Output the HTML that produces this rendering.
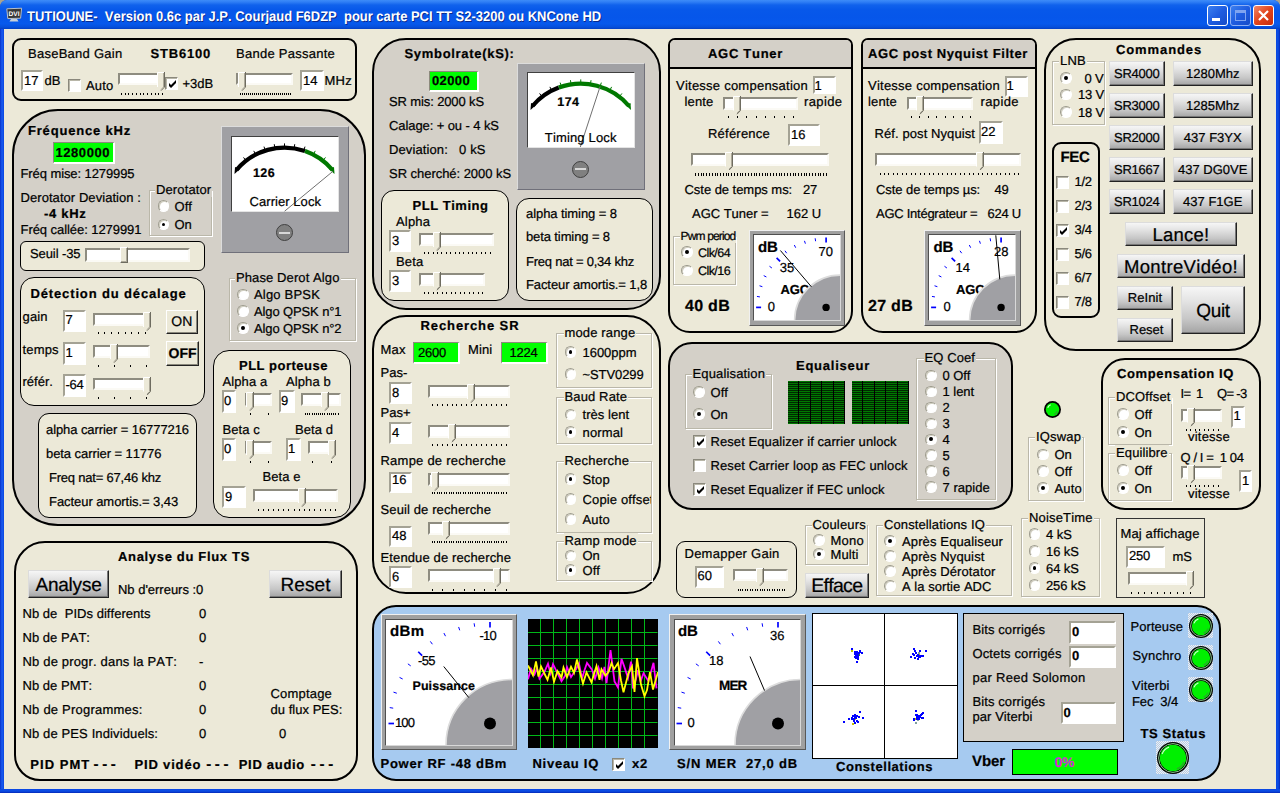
<!DOCTYPE html>
<html lang="fr"><head><meta charset="utf-8"><title>TUTIOUNE</title>
<style>
html,body{margin:0;padding:0;background:#ECE9D8;overflow:hidden}
#w{position:relative;width:1280px;height:793px;overflow:hidden;background:#a8a490;font-family:"Liberation Sans",Arial,sans-serif;font-size:13px;color:#000;font-kerning:none;text-rendering:geometricPrecision}
#w div,#w span,#w svg{position:absolute;box-sizing:border-box}
#w span{white-space:pre;-webkit-text-stroke:0.22px #000}
.tb{background:#fff;border:2px solid;border-color:#a4a294 #fff #fff #a4a294}
.gb{background:#00FF00;border:solid;border-width:1px 2px 2px 1px;border-color:#8c8a7c #fff #fff #8c8a7c}
.tr{background:#fff;border:2px solid;border-color:#8e8c80 #fbfaf5 #fbfaf5 #8e8c80}
.rd{width:11.4px;height:11.4px;border-radius:50%;background:#fff;border:1px solid;border-color:#a09e90 #fff #fff #a09e90;box-shadow:inset 1px 1px 0 #d0cec0}
.rd.on::after{content:"";position:absolute;left:2.9px;top:2.9px;width:3.8px;height:3.8px;border-radius:50%;background:#000}
.ck{width:13px;height:13px;background:#fff;border:1px solid;border-color:#8a887c #fff #fff #8a887c;box-shadow:inset 1px 1px 0 #b8b6a8}
.grp{border:1px solid #bab7a9;box-shadow:1px 1px 0 #fff,inset 1px 1px 0 #fff}
.bt{background:linear-gradient(#f6f6f6 0%,#e4e4e4 30%,#c6c6c6 70%,#a4a4a4 100%);border:1px solid;border-color:#dcdcdc #222 #222 #dcdcdc;box-shadow:inset -1px -1px 0 #777}
.bf{background:#ECE9D8;border:1px solid;border-color:#fff #222 #222 #fff;box-shadow:inset -1px -1px 0 #8a887c}
</style></head>
<body><div id="w">
<div style="left:0px;top:0px;width:1280px;height:793px;background:#0A3FD9;border-radius:7px 7px 0 0"></div>
<div style="left:0px;top:0px;width:1280px;height:29px;background:linear-gradient(#3d8cf8 0,#2f7ef5 2px,#1062ec 5px,#0758ea 10px,#0656ea 60%,#0759ec 82%,#0650dc 93%,#0440c4 100%);border-radius:7px 7px 0 0"></div>
<div style="left:0px;top:29px;width:4px;height:764px;background:linear-gradient(90deg,#0831c9,#1a5cf0 50%,#0a46e0)"></div>
<div style="left:1276px;top:29px;width:4px;height:764px;background:linear-gradient(90deg,#0a46e0,#0c4fe6 50%,#0527b8)"></div>
<div style="left:0px;top:789px;width:1280px;height:4px;background:linear-gradient(#0a46e0,#0c4fe6 50%,#0527b8)"></div>
<div style="left:4px;top:29px;width:1272px;height:760px;background:#ECE9D8"></div>
<svg style="left:6px;top:7px" width="17" height="16" viewBox="0 0 17 16"><path d="M0.8,1.8 L15.6,1.2 L14.6,11.2 L1.8,11.6 Z" fill="#383838" stroke="#b8c0c8" stroke-width="1"/><path d="M5,12 h6 l1.5,2.6 h-9 z" fill="#c8d0d8"/><text x="2.6" y="9.3" font-size="6.6" font-weight="700" fill="#fff" font-family="Liberation Sans,sans-serif" textLength="11" lengthAdjust="spacingAndGlyphs">DVI</text></svg>
<span style="left:26.5px;top:8px;line-height:16px;font-size:14px;font-weight:700;color:#fff;text-shadow:1px 1px 0 #0a2a8c;-webkit-text-stroke:0;transform:scaleX(0.926);transform-origin:0 0;">TUTIOUNE-  Version 0.6c par J.P. Courjaud F6DZP  pour carte PCI TT S2-3200 ou KNCone HD</span>
<div style="left:1207px;top:5px;width:21px;height:21px;border-radius:3px;border:1px solid #fff;background:linear-gradient(135deg,#3c80f0,#1f5ce0 50%,#164cc8)"><div style="left:4px;top:12px;width:8px;height:3px;background:#fff"></div></div>
<div style="left:1230px;top:5px;width:21px;height:21px;border-radius:3px;border:1px solid #8fb0f4;background:linear-gradient(135deg,#3c80f0,#1f5ce0 50%,#164cc8)"><div style="left:4px;top:4px;width:11px;height:11px;border:1px solid #7fa4f0;border-top-width:3px"></div></div>
<div style="left:1253px;top:5px;width:21px;height:21px;border-radius:3px;border:1px solid #fff;background:linear-gradient(135deg,#f08868,#e2441c 50%,#c62c0c)"><svg style="left:3px;top:3px" width="13" height="13" viewBox="0 0 13 13"><path d="M2,2 L11,11 M11,2 L2,11" stroke="#fff" stroke-width="2.2"/></svg></div>
<div style="left:12px;top:38px;width:345px;height:63px;background:#ECE9D8;border:2px solid #000;border-radius:9px"></div>
<span style="left:28px;top:46px;line-height:15px;letter-spacing:0.26px;">BaseBand Gain</span>
<span style="left:150.5px;top:46px;line-height:15px;font-weight:700;letter-spacing:0.8px;">STB6100</span>
<span style="left:236px;top:46px;line-height:15px;letter-spacing:0.26px;">Bande Passante</span>
<div class="tb" style="left:21px;top:70px;width:22px;height:21px"></div>
<span style="left:24px;top:72.7px;line-height:15px;">17</span>
<span style="left:44.5px;top:73px;line-height:15px;">dB</span>
<div class="ck" style="left:68px;top:79px"></div>
<span style="left:86px;top:78px;line-height:15px;letter-spacing:0.17px;">Auto</span>
<div class="tr" style="left:117.5px;top:72.5px;width:46.5px;height:12.5px"></div>
<svg style="left:157px;top:71.5px" width="8" height="19" viewBox="0 0 8 19"><polygon points="0,0 8,0 8,15 4,19 0,15" fill="#ECE9D8"/><path d="M0.5,15 V0.5 H7" stroke="#fff" fill="none"/><path d="M7.5,0 V15 L4,18.7" stroke="#6e6c60" fill="none"/><path d="M6.5,1 V15 L4,17.6" stroke="#ACA899" fill="none"/></svg>
<svg style="left:121px;top:92.5px" width="43" height="2" viewBox="0 0 43 2" shape-rendering="crispEdges"><path d="M0,0v2M4,0v2M7,0v2M11,0v2M15,0v2M19,0v2M22,0v2M26,0v2M30,0v2M34,0v2M37,0v2M41,0v2" stroke="#000" stroke-width="1" transform="translate(0.5,0)"/></svg>
<div class="ck" style="left:164.5px;top:77px"><svg width="13" height="13" viewBox="0 0 13 13" style="left:0;top:0"><path d="M3,5 V8 L5,10 L10,5 V2 L5,7 Z" fill="#000"/></svg></div>
<span style="left:182.5px;top:76px;line-height:15px;letter-spacing:-0.05px;">+3dB</span>
<div class="tr" style="left:236px;top:72.5px;width:56.5px;height:12.5px"></div>
<svg style="left:238px;top:71.5px" width="8" height="19" viewBox="0 0 8 19"><polygon points="0,0 8,0 8,15 4,19 0,15" fill="#ECE9D8"/><path d="M0.5,15 V0.5 H7" stroke="#fff" fill="none"/><path d="M7.5,0 V15 L4,18.7" stroke="#6e6c60" fill="none"/><path d="M6.5,1 V15 L4,17.6" stroke="#ACA899" fill="none"/></svg>
<svg style="left:239px;top:92.5px" width="53" height="2" viewBox="0 0 53 2" shape-rendering="crispEdges"><path d="M1,0v2M3,0v2M5,0v2M7,0v2M9,0v2M11,0v2M13,0v2M15,0v2M17,0v2M19,0v2M21,0v2M23,0v2M25,0v2M27,0v2M29,0v2M31,0v2M33,0v2M35,0v2M37,0v2M39,0v2M41,0v2M43,0v2M45,0v2M47,0v2M49,0v2M51,0v2" stroke="#000" stroke-width="1" transform="translate(0.5,0)"/></svg>
<div class="tb" style="left:300px;top:70px;width:24px;height:21px"></div>
<span style="left:303px;top:72.7px;line-height:15px;">14</span>
<span style="left:324.5px;top:73px;line-height:15px;letter-spacing:0.22px;">MHz</span>
<div style="left:12px;top:109px;width:353.5px;height:417px;background:#D4D0C8;border:2px solid #000;border-radius:46px"></div>
<span style="left:28px;top:123px;line-height:15px;font-weight:700;letter-spacing:0.81px;">Fréquence kHz</span>
<div class="gb" style="left:52.5px;top:142px;width:62.5px;height:22px"></div>
<span style="left:55.5px;top:144.5px;line-height:15px;font-weight:700;letter-spacing:0.56px;">1280000</span>
<span style="left:20.5px;top:166px;line-height:15px;letter-spacing:-0.09px;">Fréq mise: 1279995</span>
<span style="left:20.5px;top:190px;line-height:15px;letter-spacing:0.06px;">Derotator Deviation :</span>
<span style="left:44px;top:205.5px;line-height:15px;font-weight:700;letter-spacing:0.7px;">-4 kHz</span>
<span style="left:20.5px;top:222px;line-height:15px;letter-spacing:-0.06px;">Fréq callée: 1279991</span>
<div class="grp" style="left:149px;top:190px;width:63px;height:46px"></div>
<span style="left:156px;top:182px;line-height:15px;letter-spacing:0.12px;background:#D4D0C8;padding:0 1px;margin-left:-1px;">Derotator</span>
<div class="rd" style="left:157.8px;top:200.3px"></div>
<span style="left:174.5px;top:198.5px;line-height:15px;letter-spacing:0.07px;">Off</span>
<div class="rd on" style="left:157.8px;top:218.8px"></div>
<span style="left:174.5px;top:217px;line-height:15px;">On</span>
<div style="left:221px;top:126px;width:128px;height:127px;background:#A0A0A4;border:1px solid;border-color:#dcdcdc #70707a #70707a #dcdcdc"></div>
<div style="left:231px;top:136px;width:107.5px;height:76px;background:#fff;border:1px solid;border-color:#404040 #e4e4e4 #e4e4e4 #404040"></div>
<svg style="left:231px;top:136px" width="107.5" height="76" viewBox="0 0 107.5 76"><path d="M5.5,34 A62.63,62.63 0 0 1 74,15.05" stroke="#000" stroke-width="4.2" fill="none"/><path d="M74,15.05 A62.63,62.63 0 0 1 101.5,34" stroke="#007800" stroke-width="4.2" fill="none"/><path d="M15.1,24.75 l-2.58,-3.32" stroke="#000" stroke-width="1"/><path d="M24.7,18.61 l-1.93,-3.73" stroke="#000" stroke-width="1"/><path d="M34.3,14.62 l-1.29,-4" stroke="#000" stroke-width="1"/><path d="M43.9,12.34 l-0.64,-4.15" stroke="#000" stroke-width="1"/><path d="M53.5,11.6 l0,-4.2" stroke="#000" stroke-width="1"/><path d="M63.1,12.34 l0.64,-4.15" stroke="#000" stroke-width="1"/><path d="M72.7,14.62 l1.29,-4" stroke="#000" stroke-width="1"/><path d="M82.3,18.61 l1.93,-3.73" stroke="#007800" stroke-width="1"/><path d="M91.9,24.75 l2.58,-3.32" stroke="#007800" stroke-width="1"/><path d="M3.5,38 l0.5,-7 l5,2 z" fill="#000"/><path d="M103.5,38 l-0.5,-7 l-5,2 z" fill="#007800"/><path d="M101.8,35.4 L53.6,75.2" stroke="#707070" stroke-width="1"/></svg>
<span style="left:253px;top:166px;line-height:14px;font-size:12.5px;font-weight:700;letter-spacing:0.38px;">126</span>
<span style="left:249.5px;top:193.5px;line-height:15px;letter-spacing:0.06px;">Carrier Lock</span>
<div style="left:275.5px;top:224px;width:17px;height:17px;border-radius:50%;background:#808080;border:1.5px solid #404040"></div>
<div style="left:278.5px;top:231.5px;width:11px;height:2px;background:#d8d8d8"></div>
<div style="left:20px;top:241px;width:185px;height:30px;background:#ECE9D8;border:1px solid #000;border-radius:6px"></div>
<span style="left:30px;top:246px;line-height:15px;letter-spacing:-0.09px;">Seuil -35</span>
<div class="tr" style="left:84.5px;top:247.5px;width:105px;height:14.5px"></div>
<div style="left:120px;top:247px;width:8px;height:15.5px;background:#ECE9D8;box-sizing:border-box;border:1px solid;border-color:#fff #6e6c60 #6e6c60 #fff;box-shadow:inset -1px -1px 0 #ACA899"></div>
<div style="left:20px;top:277px;width:185px;height:129px;background:#ECE9D8;border:1px solid #000;border-radius:14px"></div>
<span style="left:30.5px;top:285.5px;line-height:15px;font-weight:700;letter-spacing:0.86px;">Détection du décalage</span>
<span style="left:22.5px;top:309px;line-height:15px;letter-spacing:0.17px;">gain</span>
<div class="tb" style="left:62.5px;top:309.5px;width:23px;height:22.5px"></div>
<span style="left:65.5px;top:312.2px;line-height:15px;">7</span>
<div class="tr" style="left:93px;top:312.5px;width:57px;height:13.5px"></div>
<svg style="left:142.5px;top:311.5px" width="8" height="19" viewBox="0 0 8 19"><polygon points="0,0 8,0 8,15 4,19 0,15" fill="#ECE9D8"/><path d="M0.5,15 V0.5 H7" stroke="#fff" fill="none"/><path d="M7.5,0 V15 L4,18.7" stroke="#6e6c60" fill="none"/><path d="M6.5,1 V15 L4,17.6" stroke="#ACA899" fill="none"/></svg>
<svg style="left:97px;top:332px" width="50" height="2" viewBox="0 0 50 2" shape-rendering="crispEdges"><path d="M1,0v2M7,0v2M14,0v2M21,0v2M28,0v2M34,0v2M41,0v2M48,0v2" stroke="#000" stroke-width="1" transform="translate(0.5,0)"/></svg>
<div class="bf" style="left:166px;top:309.5px;width:31.5px;height:24px"></div>
<span style="left:171.25px;top:312.5px;line-height:16px;font-size:14px;">ON</span>
<span style="left:22.5px;top:342px;line-height:15px;letter-spacing:0.18px;">temps</span>
<div class="tb" style="left:62.5px;top:342px;width:23px;height:23px"></div>
<span style="left:65.5px;top:344.7px;line-height:15px;">1</span>
<div class="tr" style="left:93px;top:345px;width:57px;height:13px"></div>
<svg style="left:110px;top:344px" width="8" height="19" viewBox="0 0 8 19"><polygon points="0,0 8,0 8,15 4,19 0,15" fill="#ECE9D8"/><path d="M0.5,15 V0.5 H7" stroke="#fff" fill="none"/><path d="M7.5,0 V15 L4,18.7" stroke="#6e6c60" fill="none"/><path d="M6.5,1 V15 L4,17.6" stroke="#ACA899" fill="none"/></svg>
<svg style="left:97px;top:364.5px" width="51" height="2" viewBox="0 0 51 2" shape-rendering="crispEdges"><path d="M1,0v2M17,0v2M33,0v2M49,0v2" stroke="#000" stroke-width="1" transform="translate(0.5,0)"/></svg>
<div class="bf" style="left:166px;top:341px;width:33px;height:24.5px"></div>
<span style="left:168.5px;top:344.5px;line-height:16px;font-size:14px;font-weight:700;">OFF</span>
<span style="left:22.5px;top:374px;line-height:15px;">référ.</span>
<div class="tb" style="left:62.5px;top:374px;width:23px;height:22.5px"></div>
<span style="left:65.5px;top:376.7px;line-height:15px;letter-spacing:-0.29px;">-64</span>
<div class="tr" style="left:93px;top:377.5px;width:57px;height:12.5px"></div>
<svg style="left:142.5px;top:376.5px" width="8" height="18.5" viewBox="0 0 8 18.5"><polygon points="0,0 8,0 8,14.5 4,18.5 0,14.5" fill="#ECE9D8"/><path d="M0.5,14.5 V0.5 H7" stroke="#fff" fill="none"/><path d="M7.5,0 V14.5 L4,18.2" stroke="#6e6c60" fill="none"/><path d="M6.5,1 V14.5 L4,17.1" stroke="#ACA899" fill="none"/></svg>
<svg style="left:97px;top:396.5px" width="51" height="2" viewBox="0 0 51 2" shape-rendering="crispEdges"><path d="M1,0v2M17,0v2M33,0v2M49,0v2" stroke="#000" stroke-width="1" transform="translate(0.5,0)"/></svg>
<div style="left:38px;top:413px;width:159px;height:105px;background:#ECE9D8;border:1px solid #000;border-radius:11px"></div>
<span style="left:46px;top:422px;line-height:15px;letter-spacing:-0.08px;">alpha carrier = 16777216</span>
<span style="left:46px;top:445.5px;line-height:15px;letter-spacing:-0.07px;">beta carrier = 11776</span>
<span style="left:49px;top:470px;line-height:15px;letter-spacing:-0.21px;">Freq nat= 67,46 khz</span>
<span style="left:49px;top:493.5px;line-height:15px;letter-spacing:-0.06px;">Facteur amortis.= 3,43</span>
<div class="grp" style="left:229px;top:277.5px;width:127px;height:63px"></div>
<span style="left:236px;top:269.5px;line-height:15px;letter-spacing:0.1px;background:#D4D0C8;padding:0 1px;margin-left:-1px;">Phase Derot Algo</span>
<div class="rd" style="left:237.3px;top:288.8px"></div>
<span style="left:254px;top:287px;line-height:15px;letter-spacing:0.19px;">Algo BPSK</span>
<div class="rd" style="left:237.3px;top:305.3px"></div>
<span style="left:254px;top:303.5px;line-height:15px;letter-spacing:-0.12px;">Algo QPSK n°1</span>
<div class="rd on" style="left:237.3px;top:322.3px"></div>
<span style="left:254px;top:320.5px;line-height:15px;letter-spacing:-0.12px;">Algo QPSK n°2</span>
<div style="left:212.5px;top:350px;width:138.5px;height:168px;background:#ECE9D8;border:1px solid #000;border-radius:16px"></div>
<span style="left:239px;top:358px;line-height:15px;font-weight:700;letter-spacing:0.49px;">PLL porteuse</span>
<span style="left:222.5px;top:374px;line-height:15px;letter-spacing:0.1px;">Alpha a</span>
<span style="left:286px;top:374px;line-height:15px;letter-spacing:0.1px;">Alpha b</span>
<div class="tb" style="left:222px;top:390px;width:14px;height:22.5px"></div>
<span style="left:224px;top:392.7px;line-height:15px;">0</span>
<div class="tr" style="left:245px;top:393px;width:27px;height:13px"></div>
<svg style="left:246px;top:392px" width="8" height="19" viewBox="0 0 8 19"><polygon points="0,0 8,0 8,15 4,19 0,15" fill="#ECE9D8"/><path d="M0.5,15 V0.5 H7" stroke="#fff" fill="none"/><path d="M7.5,0 V15 L4,18.7" stroke="#6e6c60" fill="none"/><path d="M6.5,1 V15 L4,17.6" stroke="#ACA899" fill="none"/></svg>
<svg style="left:250px;top:412.5px" width="20" height="2" viewBox="0 0 20 2" shape-rendering="crispEdges"><path d="M0,0v2M18,0v2" stroke="#000" stroke-width="1" transform="translate(0.5,0)"/></svg>
<div class="tb" style="left:279px;top:390px;width:15.5px;height:22.5px"></div>
<span style="left:281px;top:392.7px;line-height:15px;">9</span>
<div class="tr" style="left:301px;top:393px;width:40px;height:13px"></div>
<svg style="left:321px;top:392px" width="8" height="19" viewBox="0 0 8 19"><polygon points="0,0 8,0 8,15 4,19 0,15" fill="#ECE9D8"/><path d="M0.5,15 V0.5 H7" stroke="#fff" fill="none"/><path d="M7.5,0 V15 L4,18.7" stroke="#6e6c60" fill="none"/><path d="M6.5,1 V15 L4,17.6" stroke="#ACA899" fill="none"/></svg>
<svg style="left:305px;top:412.5px" width="35" height="2" viewBox="0 0 35 2" shape-rendering="crispEdges"><path d="M0,0v2M2,0v2M4,0v2M7,0v2M9,0v2M11,0v2M13,0v2M15,0v2M17,0v2M19,0v2M22,0v2M24,0v2M26,0v2M28,0v2M30,0v2M33,0v2" stroke="#000" stroke-width="1" transform="translate(0.5,0)"/></svg>
<span style="left:222.5px;top:422px;line-height:15px;letter-spacing:0.08px;">Beta c</span>
<span style="left:295px;top:422px;line-height:15px;letter-spacing:0.08px;">Beta d</span>
<div class="tb" style="left:222px;top:438px;width:14px;height:22.5px"></div>
<span style="left:224px;top:440.7px;line-height:15px;">0</span>
<div class="tr" style="left:245px;top:441px;width:27px;height:13px"></div>
<svg style="left:246px;top:440px" width="8" height="19" viewBox="0 0 8 19"><polygon points="0,0 8,0 8,15 4,19 0,15" fill="#ECE9D8"/><path d="M0.5,15 V0.5 H7" stroke="#fff" fill="none"/><path d="M7.5,0 V15 L4,18.7" stroke="#6e6c60" fill="none"/><path d="M6.5,1 V15 L4,17.6" stroke="#ACA899" fill="none"/></svg>
<svg style="left:250px;top:460.5px" width="20" height="2" viewBox="0 0 20 2" shape-rendering="crispEdges"><path d="M0,0v2M18,0v2" stroke="#000" stroke-width="1" transform="translate(0.5,0)"/></svg>
<div class="tb" style="left:286px;top:438px;width:15px;height:22.5px"></div>
<span style="left:288px;top:440.7px;line-height:15px;">1</span>
<div class="tr" style="left:308px;top:441px;width:27px;height:13px"></div>
<svg style="left:327.5px;top:440px" width="8" height="19" viewBox="0 0 8 19"><polygon points="0,0 8,0 8,15 4,19 0,15" fill="#ECE9D8"/><path d="M0.5,15 V0.5 H7" stroke="#fff" fill="none"/><path d="M7.5,0 V15 L4,18.7" stroke="#6e6c60" fill="none"/><path d="M6.5,1 V15 L4,17.6" stroke="#ACA899" fill="none"/></svg>
<svg style="left:312px;top:460.5px" width="21" height="2" viewBox="0 0 21 2" shape-rendering="crispEdges"><path d="M0,0v2M19,0v2" stroke="#000" stroke-width="1" transform="translate(0.5,0)"/></svg>
<span style="left:262.5px;top:469px;line-height:15px;letter-spacing:0.08px;">Beta e</span>
<div class="tb" style="left:222px;top:486px;width:23.5px;height:22px"></div>
<span style="left:225px;top:488.7px;line-height:15px;">9</span>
<div class="tr" style="left:253px;top:489px;width:85px;height:13px"></div>
<svg style="left:298px;top:488px" width="8" height="19" viewBox="0 0 8 19"><polygon points="0,0 8,0 8,15 4,19 0,15" fill="#ECE9D8"/><path d="M0.5,15 V0.5 H7" stroke="#fff" fill="none"/><path d="M7.5,0 V15 L4,18.7" stroke="#6e6c60" fill="none"/><path d="M6.5,1 V15 L4,17.6" stroke="#ACA899" fill="none"/></svg>
<svg style="left:257px;top:508.5px" width="80" height="2" viewBox="0 0 80 2" shape-rendering="crispEdges"><path d="M1,0v2M6,0v2M11,0v2M16,0v2M21,0v2M26,0v2M31,0v2M37,0v2M42,0v2M47,0v2M52,0v2M57,0v2M63,0v2M68,0v2M73,0v2M78,0v2" stroke="#000" stroke-width="1" transform="translate(0.5,0)"/></svg>
<div style="left:14px;top:541px;width:344px;height:240px;background:#ECE9D8;border:2px solid #000;border-radius:31px 31px 26px 26px"></div>
<span style="left:118px;top:549px;line-height:15px;font-weight:700;letter-spacing:0.67px;">Analyse du Flux TS</span>
<div class="bt" style="left:28px;top:570px;width:81px;height:27.5px"></div>
<span style="left:35.5px;top:574.5px;line-height:21px;font-size:19px;letter-spacing:-0.23px;">Analyse</span>
<div class="bt" style="left:269px;top:570px;width:73px;height:27.5px"></div>
<span style="left:280.5px;top:574.5px;line-height:21px;font-size:19px;letter-spacing:0.07px;">Reset</span>
<span style="left:118px;top:582px;line-height:15px;letter-spacing:-0.02px;">Nb d'erreurs :0</span>
<span style="left:22.5px;top:605.5px;line-height:15px;letter-spacing:0.04px;">Nb de  PIDs differents</span>
<span style="left:199px;top:605.5px;line-height:15px;">0</span>
<span style="left:22.5px;top:630px;line-height:15px;letter-spacing:0.03px;">Nb de PAT:</span>
<span style="left:199px;top:630px;line-height:15px;">0</span>
<span style="left:22.5px;top:653.5px;line-height:15px;letter-spacing:0.17px;">Nb de progr. dans la PAT:</span>
<span style="left:199px;top:653.5px;line-height:15px;">-</span>
<span style="left:22.5px;top:677.5px;line-height:15px;letter-spacing:0.03px;">Nb de PMT:</span>
<span style="left:199px;top:677.5px;line-height:15px;">0</span>
<span style="left:22.5px;top:702px;line-height:15px;letter-spacing:0.22px;">Nb de Programmes:</span>
<span style="left:199px;top:702px;line-height:15px;">0</span>
<span style="left:22.5px;top:725.5px;line-height:15px;letter-spacing:0.12px;">Nb de PES Individuels:</span>
<span style="left:199px;top:725.5px;line-height:15px;">0</span>
<span style="left:270.5px;top:686px;line-height:15px;letter-spacing:0.19px;">Comptage</span>
<span style="left:270.5px;top:702px;line-height:15px;letter-spacing:0.03px;">du flux PES:</span>
<span style="left:279px;top:725.5px;line-height:15px;">0</span>
<span style="left:30.3px;top:757px;line-height:15px;font-weight:700;letter-spacing:1.04px;">PID PMT</span>
<span style="left:93.5px;top:756px;line-height:17px;font-size:15px;font-weight:700;letter-spacing:3.67px;">---</span>
<span style="left:134.5px;top:757px;line-height:15px;font-weight:700;letter-spacing:0.83px;">PID vidéo</span>
<span style="left:206.2px;top:756px;line-height:17px;font-size:15px;font-weight:700;letter-spacing:3.67px;">---</span>
<span style="left:238.75px;top:757px;line-height:15px;font-weight:700;letter-spacing:0.7px;">PID audio</span>
<span style="left:310.8px;top:756px;line-height:17px;font-size:15px;font-weight:700;letter-spacing:3.67px;">---</span>
<div style="left:372px;top:38px;width:289px;height:272px;background:#D4D0C8;border:2px solid #000;border-radius:34px"></div>
<span style="left:404.5px;top:46px;line-height:15px;font-weight:700;letter-spacing:0.69px;">Symbolrate(kS):</span>
<div class="gb" style="left:429px;top:70.5px;width:50px;height:21px"></div>
<span style="left:432px;top:72.5px;line-height:15px;font-weight:700;letter-spacing:0.37px;">02000</span>
<span style="left:389px;top:93.5px;line-height:15px;letter-spacing:-0.12px;">SR mis: 2000 kS</span>
<span style="left:389px;top:118px;line-height:15px;letter-spacing:-0.09px;">Calage: + ou - 4 kS</span>
<span style="left:389px;top:142px;line-height:15px;letter-spacing:0.11px;">Deviation:   0 kS</span>
<span style="left:389px;top:165.5px;line-height:15px;letter-spacing:-0.04px;">SR cherché: 2000 kS</span>
<div style="left:517px;top:62.5px;width:127.5px;height:127px;background:#A0A0A4;border:1px solid;border-color:#dcdcdc #70707a #70707a #dcdcdc"></div>
<div style="left:527px;top:72px;width:108px;height:76px;background:#fff;border:1px solid;border-color:#404040 #e4e4e4 #e4e4e4 #404040"></div>
<svg style="left:527px;top:72px" width="108" height="76" viewBox="0 0 108 76"><path d="M5.5,34 A63.17,63.17 0 0 1 31.8,15.54" stroke="#000" stroke-width="4.2" fill="none"/><path d="M31.8,15.54 A63.17,63.17 0 0 1 102,34" stroke="#007800" stroke-width="4.2" fill="none"/><path d="M15.15,24.77 l-2.57,-3.32" stroke="#000" stroke-width="1"/><path d="M24.8,18.62 l-1.92,-3.73" stroke="#000" stroke-width="1"/><path d="M34.45,14.62 l-1.28,-4" stroke="#007800" stroke-width="1"/><path d="M44.1,12.34 l-0.64,-4.15" stroke="#007800" stroke-width="1"/><path d="M53.75,11.6 l0,-4.2" stroke="#007800" stroke-width="1"/><path d="M63.4,12.34 l0.64,-4.15" stroke="#007800" stroke-width="1"/><path d="M73.05,14.62 l1.28,-4" stroke="#007800" stroke-width="1"/><path d="M82.7,18.62 l1.92,-3.73" stroke="#007800" stroke-width="1"/><path d="M92.35,24.77 l2.57,-3.32" stroke="#007800" stroke-width="1"/><path d="M3.5,38 l0.5,-7 l5,2 z" fill="#000"/><path d="M104,38 l-0.5,-7 l-5,2 z" fill="#007800"/><path d="M73.1,14.5 L53.3,75" stroke="#707070" stroke-width="1"/></svg>
<span style="left:557.3px;top:94.5px;line-height:14px;font-size:12.5px;font-weight:700;letter-spacing:0.38px;">174</span>
<span style="left:544.8px;top:130px;line-height:15px;letter-spacing:0.16px;">Timing Lock</span>
<div style="left:571.5px;top:160.5px;width:17px;height:17px;border-radius:50%;background:#808080;border:1.5px solid #404040"></div>
<div style="left:574.5px;top:168px;width:11px;height:2px;background:#d8d8d8"></div>
<div style="left:380.5px;top:190px;width:128.5px;height:111px;background:#ECE9D8;border:1px solid #000;border-radius:13px"></div>
<span style="left:412.5px;top:197.5px;line-height:15px;font-weight:700;letter-spacing:0.52px;">PLL Timing</span>
<span style="left:396px;top:213.5px;line-height:15px;letter-spacing:0.18px;">Alpha</span>
<div class="tb" style="left:389px;top:230px;width:22px;height:21.5px"></div>
<span style="left:392px;top:232.7px;line-height:15px;">3</span>
<div class="tr" style="left:419px;top:232.5px;width:75px;height:13.5px"></div>
<svg style="left:432.5px;top:231.5px" width="8" height="19" viewBox="0 0 8 19"><polygon points="0,0 8,0 8,15 4,19 0,15" fill="#ECE9D8"/><path d="M0.5,15 V0.5 H7" stroke="#fff" fill="none"/><path d="M7.5,0 V15 L4,18.7" stroke="#6e6c60" fill="none"/><path d="M6.5,1 V15 L4,17.6" stroke="#ACA899" fill="none"/></svg>
<svg style="left:424px;top:252px" width="68" height="2" viewBox="0 0 68 2" shape-rendering="crispEdges"><path d="M0,0v2M4,0v2M9,0v2M13,0v2M17,0v2M22,0v2M26,0v2M31,0v2M35,0v2M39,0v2M44,0v2M48,0v2M52,0v2M57,0v2M61,0v2M66,0v2" stroke="#000" stroke-width="1" transform="translate(0.5,0)"/></svg>
<span style="left:396px;top:253.5px;line-height:15px;letter-spacing:0.17px;">Beta</span>
<div class="tb" style="left:389px;top:270px;width:22px;height:21.5px"></div>
<span style="left:392px;top:272.7px;line-height:15px;">3</span>
<div class="tr" style="left:419px;top:273px;width:66px;height:13px"></div>
<svg style="left:432.5px;top:272px" width="8" height="18.5" viewBox="0 0 8 18.5"><polygon points="0,0 8,0 8,14.5 4,18.5 0,14.5" fill="#ECE9D8"/><path d="M0.5,14.5 V0.5 H7" stroke="#fff" fill="none"/><path d="M7.5,0 V14.5 L4,18.2" stroke="#6e6c60" fill="none"/><path d="M6.5,1 V14.5 L4,17.1" stroke="#ACA899" fill="none"/></svg>
<svg style="left:424px;top:292px" width="60" height="2" viewBox="0 0 60 2" shape-rendering="crispEdges"><path d="M0,0v2M4,0v2M9,0v2M13,0v2M18,0v2M22,0v2M27,0v2M31,0v2M36,0v2M40,0v2M45,0v2M49,0v2M54,0v2M58,0v2" stroke="#000" stroke-width="1" transform="translate(0.5,0)"/></svg>
<div style="left:516px;top:197.5px;width:137px;height:103.5px;background:#ECE9D8;border:1px solid #000;border-radius:13px"></div>
<span style="left:526px;top:205.5px;line-height:15px;letter-spacing:-0.07px;">alpha timing = 8</span>
<span style="left:526px;top:229px;line-height:15px;letter-spacing:-0.11px;">beta timing = 8</span>
<span style="left:526px;top:253.5px;line-height:15px;letter-spacing:-0.23px;">Freq nat = 0,34 khz</span>
<span style="left:526px;top:277px;line-height:15px;letter-spacing:-0.1px;">Facteur amortis.= 1,8</span>
<div style="left:372px;top:315px;width:289px;height:279px;background:#ECE9D8;border:2px solid #000;border-radius:34px"></div>
<span style="left:420.5px;top:318px;line-height:15px;font-weight:700;letter-spacing:0.9px;">Recherche SR</span>
<span style="left:380.5px;top:342px;line-height:15px;letter-spacing:0.22px;">Max</span>
<div class="gb" style="left:412.5px;top:342px;width:47px;height:21.5px"></div>
<span style="left:418px;top:345px;line-height:15px;letter-spacing:-0.23px;">2600</span>
<span style="left:468px;top:342px;line-height:15px;letter-spacing:0.11px;">Mini</span>
<div class="gb" style="left:500.5px;top:342px;width:47px;height:21.5px"></div>
<span style="left:509.5px;top:345px;line-height:15px;letter-spacing:-0.23px;">1224</span>
<span style="left:380.5px;top:365px;line-height:15px;letter-spacing:0.07px;">Pas-</span>
<div class="tb" style="left:389px;top:382px;width:23px;height:22px"></div>
<span style="left:392px;top:384.7px;line-height:15px;">8</span>
<div class="tr" style="left:427.5px;top:384.5px;width:82px;height:13px"></div>
<svg style="left:467px;top:383.5px" width="8" height="19" viewBox="0 0 8 19"><polygon points="0,0 8,0 8,15 4,19 0,15" fill="#ECE9D8"/><path d="M0.5,15 V0.5 H7" stroke="#fff" fill="none"/><path d="M7.5,0 V15 L4,18.7" stroke="#6e6c60" fill="none"/><path d="M6.5,1 V15 L4,17.6" stroke="#ACA899" fill="none"/></svg>
<svg style="left:432px;top:404px" width="76" height="2" viewBox="0 0 76 2" shape-rendering="crispEdges"><path d="M0,0v2M5,0v2M10,0v2M15,0v2M20,0v2M24,0v2M29,0v2M34,0v2M39,0v2M44,0v2M49,0v2M54,0v2M59,0v2M64,0v2M69,0v2M74,0v2" stroke="#000" stroke-width="1" transform="translate(0.5,0)"/></svg>
<span style="left:380.5px;top:405px;line-height:15px;letter-spacing:0.07px;">Pas+</span>
<div class="tb" style="left:389px;top:422px;width:23px;height:22px"></div>
<span style="left:392px;top:424.7px;line-height:15px;">4</span>
<div class="tr" style="left:427.5px;top:425px;width:82px;height:12.5px"></div>
<svg style="left:448px;top:424px" width="8" height="18.5" viewBox="0 0 8 18.5"><polygon points="0,0 8,0 8,14.5 4,18.5 0,14.5" fill="#ECE9D8"/><path d="M0.5,14.5 V0.5 H7" stroke="#fff" fill="none"/><path d="M7.5,0 V14.5 L4,18.2" stroke="#6e6c60" fill="none"/><path d="M6.5,1 V14.5 L4,17.1" stroke="#ACA899" fill="none"/></svg>
<svg style="left:432px;top:444px" width="76" height="2" viewBox="0 0 76 2" shape-rendering="crispEdges"><path d="M0,0v2M5,0v2M10,0v2M15,0v2M20,0v2M24,0v2M29,0v2M34,0v2M39,0v2M44,0v2M49,0v2M54,0v2M59,0v2M64,0v2M69,0v2M74,0v2" stroke="#000" stroke-width="1" transform="translate(0.5,0)"/></svg>
<span style="left:380.5px;top:453px;line-height:15px;letter-spacing:0.23px;">Rampe de recherche</span>
<div class="tb" style="left:389px;top:472px;width:23px;height:21px"></div>
<span style="left:392px;top:472px;line-height:15px;">16</span>
<div class="tr" style="left:427.5px;top:473px;width:82px;height:13px"></div>
<svg style="left:431px;top:472px" width="8" height="19" viewBox="0 0 8 19"><polygon points="0,0 8,0 8,15 4,19 0,15" fill="#ECE9D8"/><path d="M0.5,15 V0.5 H7" stroke="#fff" fill="none"/><path d="M7.5,0 V15 L4,18.7" stroke="#6e6c60" fill="none"/><path d="M6.5,1 V15 L4,17.6" stroke="#ACA899" fill="none"/></svg>
<svg style="left:432px;top:492px" width="76" height="2" viewBox="0 0 76 2" shape-rendering="crispEdges"><path d="M0,0v2M2,0v2M5,0v2M7,0v2M9,0v2M12,0v2M14,0v2M17,0v2M19,0v2M21,0v2M24,0v2M26,0v2M28,0v2M31,0v2M33,0v2M36,0v2M38,0v2M40,0v2M43,0v2M45,0v2M47,0v2M50,0v2M52,0v2M55,0v2M57,0v2M59,0v2M62,0v2M64,0v2M66,0v2M69,0v2M71,0v2M74,0v2" stroke="#000" stroke-width="1" transform="translate(0.5,0)"/></svg>
<span style="left:380.5px;top:501.5px;line-height:15px;letter-spacing:0.12px;">Seuil de recherche</span>
<div class="tb" style="left:389px;top:525.5px;width:23px;height:21.5px"></div>
<span style="left:392px;top:528.2px;line-height:15px;">48</span>
<div class="tr" style="left:427.5px;top:522px;width:82px;height:12.5px"></div>
<svg style="left:442px;top:521px" width="8" height="18.5" viewBox="0 0 8 18.5"><polygon points="0,0 8,0 8,14.5 4,18.5 0,14.5" fill="#ECE9D8"/><path d="M0.5,14.5 V0.5 H7" stroke="#fff" fill="none"/><path d="M7.5,0 V14.5 L4,18.2" stroke="#6e6c60" fill="none"/><path d="M6.5,1 V14.5 L4,17.1" stroke="#ACA899" fill="none"/></svg>
<svg style="left:432px;top:540.5px" width="76" height="2" viewBox="0 0 76 2" shape-rendering="crispEdges"><path d="M0,0v2M2,0v2M5,0v2M7,0v2M9,0v2M12,0v2M14,0v2M17,0v2M19,0v2M21,0v2M24,0v2M26,0v2M28,0v2M31,0v2M33,0v2M36,0v2M38,0v2M40,0v2M43,0v2M45,0v2M47,0v2M50,0v2M52,0v2M55,0v2M57,0v2M59,0v2M62,0v2M64,0v2M66,0v2M69,0v2M71,0v2M74,0v2" stroke="#000" stroke-width="1" transform="translate(0.5,0)"/></svg>
<span style="left:380.5px;top:549.5px;line-height:15px;letter-spacing:0.13px;">Etendue de recherche</span>
<div class="tb" style="left:389px;top:566px;width:23px;height:21.5px"></div>
<span style="left:392px;top:568.7px;line-height:15px;">6</span>
<div class="tr" style="left:427.5px;top:569px;width:82px;height:13px"></div>
<svg style="left:492.5px;top:568px" width="8" height="19" viewBox="0 0 8 19"><polygon points="0,0 8,0 8,15 4,19 0,15" fill="#ECE9D8"/><path d="M0.5,15 V0.5 H7" stroke="#fff" fill="none"/><path d="M7.5,0 V15 L4,18.7" stroke="#6e6c60" fill="none"/><path d="M6.5,1 V15 L4,17.6" stroke="#ACA899" fill="none"/></svg>
<svg style="left:432px;top:589px" width="76" height="2" viewBox="0 0 76 2" shape-rendering="crispEdges"><path d="M0,0v2M10,0v2M21,0v2M32,0v2M42,0v2M52,0v2M63,0v2M74,0v2" stroke="#000" stroke-width="1" transform="translate(0.5,0)"/></svg>
<div class="grp" style="left:556px;top:332.5px;width:96px;height:55.5px"></div>
<span style="left:564.5px;top:324.5px;line-height:15px;letter-spacing:0.14px;background:#ECE9D8;padding:0 1px;margin-left:-1px;">mode range</span>
<div class="rd on" style="left:564.8px;top:346.3px"></div>
<span style="left:582.5px;top:344.5px;line-height:15px;letter-spacing:-0.04px;">1600ppm</span>
<div class="rd" style="left:564.8px;top:368.3px"></div>
<span style="left:582.5px;top:366.5px;line-height:15px;letter-spacing:-0.08px;">~STV0299</span>
<div class="grp" style="left:556px;top:397px;width:96px;height:47px"></div>
<span style="left:564.5px;top:389px;line-height:15px;letter-spacing:0.13px;background:#ECE9D8;padding:0 1px;margin-left:-1px;">Baud Rate</span>
<div class="rd" style="left:564.8px;top:408.8px"></div>
<span style="left:582.5px;top:407px;line-height:15px;letter-spacing:0.05px;">très lent</span>
<div class="rd on" style="left:564.8px;top:426.3px"></div>
<span style="left:582.5px;top:424.5px;line-height:15px;letter-spacing:0.15px;">normal</span>
<div class="grp" style="left:556px;top:460.5px;width:96px;height:72px"></div>
<span style="left:564.5px;top:452.5px;line-height:15px;letter-spacing:0.2px;background:#ECE9D8;padding:0 1px;margin-left:-1px;">Recherche</span>
<div class="rd on" style="left:564.8px;top:473.3px"></div>
<span style="left:582.5px;top:471.5px;line-height:15px;letter-spacing:0.17px;">Stop</span>
<div class="rd" style="left:564.8px;top:493.3px"></div>
<span style="left:582.5px;top:491.5px;line-height:15px;letter-spacing:0.14px;width:68px;overflow:hidden;">Copie offset</span>
<div class="rd" style="left:564.8px;top:513.3px"></div>
<span style="left:582.5px;top:511.5px;line-height:15px;letter-spacing:0.17px;">Auto</span>
<div class="grp" style="left:556px;top:541px;width:96px;height:39.5px"></div>
<span style="left:564.5px;top:533px;line-height:15px;letter-spacing:0.15px;background:#ECE9D8;padding:0 1px;margin-left:-1px;">Ramp mode</span>
<div class="rd" style="left:564.8px;top:549.8px"></div>
<span style="left:582.5px;top:548px;line-height:15px;">On</span>
<div class="rd on" style="left:564.8px;top:564.3px"></div>
<span style="left:582.5px;top:562.5px;line-height:15px;letter-spacing:0.07px;">Off</span>
<div style="left:668px;top:38px;width:185px;height:295px;background:#ECE9D8;border:2px solid #000;border-radius:7px 7px 22px 22px"></div>
<div style="left:670px;top:40px;width:181px;height:27px;background:#D4D0C8;border-radius:5px 5px 0 0"></div>
<div style="left:668px;top:66.5px;width:185px;height:2px;background:#000"></div>
<span style="left:708px;top:45.5px;line-height:15px;font-weight:700;letter-spacing:0.71px;">AGC Tuner</span>
<span style="left:676px;top:77.5px;line-height:15px;letter-spacing:0.24px;">Vitesse compensation</span>
<div class="tb" style="left:812.5px;top:75.5px;width:23.5px;height:18px"></div>
<span style="left:814.5px;top:78.2px;line-height:15px;">1</span>
<span style="left:684.5px;top:94px;line-height:15px;letter-spacing:0.13px;">lente</span>
<span style="left:804px;top:94px;line-height:15px;letter-spacing:0.39px;">rapide</span>
<div class="tr" style="left:723px;top:97px;width:74.5px;height:12.5px"></div>
<svg style="left:732.5px;top:96px" width="8" height="18.5" viewBox="0 0 8 18.5"><polygon points="0,0 8,0 8,14.5 4,18.5 0,14.5" fill="#ECE9D8"/><path d="M0.5,14.5 V0.5 H7" stroke="#fff" fill="none"/><path d="M7.5,0 V14.5 L4,18.2" stroke="#6e6c60" fill="none"/><path d="M6.5,1 V14.5 L4,17.1" stroke="#ACA899" fill="none"/></svg>
<svg style="left:727px;top:115.5px" width="68" height="2" viewBox="0 0 68 2" shape-rendering="crispEdges"><path d="M1,0v2M10,0v2M19,0v2M29,0v2M38,0v2M47,0v2M57,0v2M66,0v2" stroke="#000" stroke-width="1" transform="translate(0.5,0)"/></svg>
<span style="left:708px;top:125.5px;line-height:15px;letter-spacing:0.22px;">Référence</span>
<div class="tb" style="left:788px;top:124px;width:32px;height:22px"></div>
<span style="left:791px;top:126.7px;line-height:15px;">16</span>
<div class="tr" style="left:691px;top:152.5px;width:138px;height:13px"></div>
<svg style="left:725px;top:151.5px" width="8" height="18.5" viewBox="0 0 8 18.5"><polygon points="0,0 8,0 8,14.5 4,18.5 0,14.5" fill="#ECE9D8"/><path d="M0.5,14.5 V0.5 H7" stroke="#fff" fill="none"/><path d="M7.5,0 V14.5 L4,18.2" stroke="#6e6c60" fill="none"/><path d="M6.5,1 V14.5 L4,17.1" stroke="#ACA899" fill="none"/></svg>
<svg style="left:695px;top:172.5px" width="133" height="3" viewBox="0 0 133 3" shape-rendering="crispEdges"><path d="M0,0v3M3,0v3M6,0v3M8,0v3M11,0v3M14,0v3M17,0v3M20,0v3M22,0v3M25,0v3M28,0v3M31,0v3M33,0v3M36,0v3M39,0v3M42,0v3M45,0v3M47,0v3M50,0v3M53,0v3M56,0v3M59,0v3M61,0v3M64,0v3M67,0v3M70,0v3M72,0v3M75,0v3M78,0v3M81,0v3M84,0v3M86,0v3M89,0v3M92,0v3M95,0v3M98,0v3M100,0v3M103,0v3M106,0v3M109,0v3M111,0v3M114,0v3M117,0v3M120,0v3M123,0v3M125,0v3M128,0v3M131,0v3" stroke="#000" stroke-width="1" transform="translate(0.5,0)"/></svg>
<span style="left:684.5px;top:182px;line-height:15px;letter-spacing:-0.04px;">Cste de temps ms:   27</span>
<span style="left:692px;top:205.5px;line-height:15px;letter-spacing:-0.03px;">AGC Tuner =     162 U</span>
<div class="grp" style="left:672.5px;top:235.5px;width:63.5px;height:49.5px"></div>
<span style="left:680.5px;top:228.5px;line-height:14px;font-size:12px;letter-spacing:-0.84px;background:#ECE9D8;padding:0 1px;margin-left:-1px;">Pwm period</span>
<div class="rd on" style="left:681.3px;top:246.3px"></div>
<span style="left:698px;top:245.5px;line-height:14px;font-size:12.5px;letter-spacing:-0.57px;">Clk/64</span>
<div class="rd" style="left:681.3px;top:264.8px"></div>
<span style="left:698px;top:264px;line-height:14px;font-size:12.5px;letter-spacing:-0.57px;">Clk/16</span>
<span style="left:685px;top:298px;line-height:17px;font-size:16px;font-weight:700;letter-spacing:0.29px;">40 dB</span>
<div style="left:748.5px;top:229.5px;width:96.5px;height:96px;background:#A0A0A0;border:1px solid;border-color:#f0f0f0 #585858 #585858 #f0f0f0"></div>
<div style="left:752.7px;top:233.7px;width:88.1px;height:87.6px;background:#fff;border:1px solid;border-color:#505050 #d8d8d8 #d8d8d8 #505050"></div>
<span style="left:758px;top:239.3px;line-height:17px;font-size:15px;font-weight:700;letter-spacing:-0.25px;">dB</span>
<span style="left:818.5px;top:243.7px;line-height:15px;">70</span>
<span style="left:779.7px;top:259.5px;line-height:15px;">35</span>
<span style="left:767.8px;top:298.5px;line-height:15px;">0</span>
<span style="left:780.5px;top:282px;line-height:15px;font-weight:700;letter-spacing:-0.15px;">AGC1</span>
<svg style="left:753.7px;top:234.7px" width="86.1" height="85.6" viewBox="0 0 86.1 85.6"><circle cx="86.1" cy="85.6" r="45.5" fill="#A0A0A4" stroke="#dcdcdc" stroke-width="1.6"/><circle cx="72.1" cy="72.4" r="3.7" fill="#000"/><path d="M7.1,72.4 L2.1,72.4" stroke="#0000ff" stroke-width="1.7"/><path d="M5.92,61.92 L2.96,61.45" stroke="#0000ff" stroke-width="1"/><path d="M8.38,51.7 L5.53,50.77" stroke="#0000ff" stroke-width="1"/><path d="M12.4,41.98 L9.73,40.62" stroke="#0000ff" stroke-width="1"/><path d="M17.9,33.02 L15.47,31.26" stroke="#0000ff" stroke-width="1"/><path d="M26.14,26.44 L22.6,22.9" stroke="#0000ff" stroke-width="1.7"/><path d="M32.72,18.2 L30.96,15.77" stroke="#0000ff" stroke-width="1"/><path d="M41.68,12.7 L40.32,10.03" stroke="#0000ff" stroke-width="1"/><path d="M51.4,8.68 L50.47,5.83" stroke="#0000ff" stroke-width="1"/><path d="M61.62,6.22 L61.15,3.26" stroke="#0000ff" stroke-width="1"/><path d="M72.1,7.4 L72.1,2.4" stroke="#0000ff" stroke-width="1.7"/><path d="M26.4,15.5 L57.5,51.9" stroke="#000" stroke-width="1"/></svg>
<div style="left:860.5px;top:38px;width:176px;height:295px;background:#ECE9D8;border:2px solid #000;border-radius:7px 7px 22px 22px"></div>
<div style="left:862.5px;top:40px;width:172px;height:27px;background:#D4D0C8;border-radius:5px 5px 0 0"></div>
<div style="left:860.5px;top:66.5px;width:176px;height:2px;background:#000"></div>
<span style="left:868px;top:45.5px;line-height:15px;font-weight:700;letter-spacing:0.58px;">AGC post Nyquist Filter</span>
<span style="left:868px;top:77.5px;line-height:15px;letter-spacing:0.24px;">Vitesse compensation</span>
<div class="tb" style="left:1004.5px;top:75.5px;width:23.5px;height:21.5px"></div>
<span style="left:1006.5px;top:78.2px;line-height:15px;">1</span>
<span style="left:868px;top:94px;line-height:15px;letter-spacing:0.13px;">lente</span>
<span style="left:980.5px;top:94px;line-height:15px;letter-spacing:0.39px;">rapide</span>
<div class="tr" style="left:907px;top:97px;width:66px;height:12.5px"></div>
<svg style="left:915.5px;top:96px" width="8" height="18.5" viewBox="0 0 8 18.5"><polygon points="0,0 8,0 8,14.5 4,18.5 0,14.5" fill="#ECE9D8"/><path d="M0.5,14.5 V0.5 H7" stroke="#fff" fill="none"/><path d="M7.5,0 V14.5 L4,18.2" stroke="#6e6c60" fill="none"/><path d="M6.5,1 V14.5 L4,17.1" stroke="#ACA899" fill="none"/></svg>
<svg style="left:911px;top:115.5px" width="61" height="2" viewBox="0 0 61 2" shape-rendering="crispEdges"><path d="M0,0v2M8,0v2M17,0v2M25,0v2M34,0v2M42,0v2M51,0v2M59,0v2" stroke="#000" stroke-width="1" transform="translate(0.5,0)"/></svg>
<span style="left:874.5px;top:125.5px;line-height:15px;letter-spacing:0.09px;">Réf. post Nyquist</span>
<div class="tb" style="left:979px;top:121px;width:24px;height:23px"></div>
<span style="left:981px;top:123.7px;line-height:15px;">22</span>
<div class="tr" style="left:875px;top:152.5px;width:146px;height:13px"></div>
<svg style="left:976px;top:151.5px" width="8" height="18.5" viewBox="0 0 8 18.5"><polygon points="0,0 8,0 8,14.5 4,18.5 0,14.5" fill="#ECE9D8"/><path d="M0.5,14.5 V0.5 H7" stroke="#fff" fill="none"/><path d="M7.5,0 V14.5 L4,18.2" stroke="#6e6c60" fill="none"/><path d="M6.5,1 V14.5 L4,17.1" stroke="#ACA899" fill="none"/></svg>
<svg style="left:879px;top:172.5px" width="141" height="2" viewBox="0 0 141 2" shape-rendering="crispEdges"><path d="M1,0v2M5,0v2M9,0v2M14,0v2M18,0v2M23,0v2M27,0v2M32,0v2M36,0v2M41,0v2M45,0v2M50,0v2M54,0v2M59,0v2M63,0v2M68,0v2M72,0v2M76,0v2M81,0v2M85,0v2M90,0v2M94,0v2M99,0v2M103,0v2M108,0v2M112,0v2M117,0v2M121,0v2M126,0v2M130,0v2M135,0v2M139,0v2" stroke="#000" stroke-width="1" transform="translate(0.5,0)"/></svg>
<span style="left:876px;top:182px;line-height:15px;letter-spacing:-0.05px;">Cste de temps µs:    49</span>
<span style="left:876px;top:205.5px;line-height:15px;letter-spacing:-0.26px;">AGC Intégrateur =   624 U</span>
<span style="left:868px;top:298px;line-height:17px;font-size:16px;font-weight:700;letter-spacing:0.29px;">27 dB</span>
<div style="left:924px;top:229.5px;width:96.5px;height:96px;background:#A0A0A0;border:1px solid;border-color:#f0f0f0 #585858 #585858 #f0f0f0"></div>
<div style="left:928.2px;top:233.7px;width:88.1px;height:87.6px;background:#fff;border:1px solid;border-color:#505050 #d8d8d8 #d8d8d8 #505050"></div>
<span style="left:933.5px;top:239.3px;line-height:17px;font-size:15px;font-weight:700;letter-spacing:-0.25px;">dB</span>
<span style="left:994px;top:243.7px;line-height:15px;">28</span>
<span style="left:955.5px;top:259.5px;line-height:15px;">14</span>
<span style="left:943.5px;top:298.5px;line-height:15px;">0</span>
<span style="left:956px;top:282px;line-height:15px;font-weight:700;letter-spacing:-0.15px;">AGC2</span>
<svg style="left:929.2px;top:234.7px" width="86.1" height="85.6" viewBox="0 0 86.1 85.6"><circle cx="86.1" cy="85.6" r="45.5" fill="#A0A0A4" stroke="#dcdcdc" stroke-width="1.6"/><circle cx="72.1" cy="72.4" r="3.7" fill="#000"/><path d="M7.1,72.4 L2.1,72.4" stroke="#0000ff" stroke-width="1.7"/><path d="M5.92,61.92 L2.96,61.45" stroke="#0000ff" stroke-width="1"/><path d="M8.38,51.7 L5.53,50.77" stroke="#0000ff" stroke-width="1"/><path d="M12.4,41.98 L9.73,40.62" stroke="#0000ff" stroke-width="1"/><path d="M17.9,33.02 L15.47,31.26" stroke="#0000ff" stroke-width="1"/><path d="M26.14,26.44 L22.6,22.9" stroke="#0000ff" stroke-width="1.7"/><path d="M32.72,18.2 L30.96,15.77" stroke="#0000ff" stroke-width="1"/><path d="M41.68,12.7 L40.32,10.03" stroke="#0000ff" stroke-width="1"/><path d="M51.4,8.68 L50.47,5.83" stroke="#0000ff" stroke-width="1"/><path d="M61.62,6.22 L61.15,3.26" stroke="#0000ff" stroke-width="1"/><path d="M72.1,7.4 L72.1,2.4" stroke="#0000ff" stroke-width="1.7"/><path d="M66.8,0.3 L70.8,44.3" stroke="#000" stroke-width="1"/></svg>
<div style="left:1044px;top:38px;width:217px;height:312.5px;background:#ECE9D8;border:2px solid #000;border-radius:32px"></div>
<span style="left:1116px;top:42px;line-height:15px;font-weight:700;letter-spacing:0.89px;">Commandes</span>
<div class="grp" style="left:1052px;top:60.5px;width:53px;height:64px"></div>
<span style="left:1060px;top:52.5px;line-height:15px;letter-spacing:0.22px;background:#ECE9D8;padding:0 1px;margin-left:-1px;">LNB</span>
<div class="rd on" style="left:1060.3px;top:72.3px"></div>
<span style="left:1084.5px;top:70.5px;line-height:15px;letter-spacing:-0.14px;">0 V</span>
<div class="rd" style="left:1060.3px;top:88.8px"></div>
<span style="left:1078px;top:87px;line-height:15px;letter-spacing:-0.16px;">13 V</span>
<div class="rd" style="left:1060.3px;top:106.3px"></div>
<span style="left:1078px;top:104.5px;line-height:15px;letter-spacing:-0.16px;">18 V</span>
<div style="left:1052px;top:141.5px;width:48px;height:176px;background:#ECE9D8;border:2px solid #000;border-radius:9px"></div>
<span style="left:1060.5px;top:148.5px;line-height:17px;font-size:15px;font-weight:700;letter-spacing:-0.33px;">FEC</span>
<div class="ck" style="left:1056px;top:175.5px"></div>
<span style="left:1074.5px;top:173.5px;line-height:15px;letter-spacing:-0.29px;">1/2</span>
<div class="ck" style="left:1056px;top:199.5px"></div>
<span style="left:1074.5px;top:197.5px;line-height:15px;letter-spacing:-0.29px;">2/3</span>
<div class="ck" style="left:1056px;top:223.5px"><svg width="13" height="13" viewBox="0 0 13 13" style="left:0;top:0"><path d="M3,5 V8 L5,10 L10,5 V2 L5,7 Z" fill="#000"/></svg></div>
<span style="left:1074.5px;top:221.5px;line-height:15px;letter-spacing:-0.29px;">3/4</span>
<div class="ck" style="left:1056px;top:247.5px"></div>
<span style="left:1074.5px;top:245.5px;line-height:15px;letter-spacing:-0.29px;">5/6</span>
<div class="ck" style="left:1056px;top:271.5px"></div>
<span style="left:1074.5px;top:269.5px;line-height:15px;letter-spacing:-0.29px;">6/7</span>
<div class="ck" style="left:1056px;top:295.5px"></div>
<span style="left:1074.5px;top:293.5px;line-height:15px;letter-spacing:-0.29px;">7/8</span>
<div class="bt" style="left:1108.5px;top:61px;width:56.5px;height:24.5px"></div>
<span style="left:1114px;top:66px;line-height:15px;letter-spacing:-0.25px;">SR4000</span>
<div class="bt" style="left:1172.5px;top:61px;width:80.5px;height:24.5px"></div>
<span style="left:1186.01px;top:66px;line-height:15px;">1280Mhz</span>
<div class="bt" style="left:1108.5px;top:93px;width:56.5px;height:24.5px"></div>
<span style="left:1114px;top:98px;line-height:15px;letter-spacing:-0.25px;">SR3000</span>
<div class="bt" style="left:1172.5px;top:93px;width:80.5px;height:24.5px"></div>
<span style="left:1186.01px;top:98px;line-height:15px;">1285Mhz</span>
<div class="bt" style="left:1108.5px;top:125px;width:56.5px;height:24.5px"></div>
<span style="left:1114px;top:130px;line-height:15px;letter-spacing:-0.25px;">SR2000</span>
<div class="bt" style="left:1172.5px;top:125px;width:80.5px;height:24.5px"></div>
<span style="left:1183.84px;top:130px;line-height:15px;">437 F3YX</span>
<div class="bt" style="left:1108.5px;top:157px;width:56.5px;height:24.5px"></div>
<span style="left:1114px;top:162px;line-height:15px;letter-spacing:-0.25px;">SR1667</span>
<div class="bt" style="left:1172.5px;top:157px;width:80.5px;height:24.5px"></div>
<span style="left:1178.06px;top:162px;line-height:15px;">437 DG0VE</span>
<div class="bt" style="left:1108.5px;top:189px;width:56.5px;height:24.5px"></div>
<span style="left:1114px;top:194px;line-height:15px;letter-spacing:-0.25px;">SR1024</span>
<div class="bt" style="left:1172.5px;top:189px;width:80.5px;height:24.5px"></div>
<span style="left:1183.12px;top:194px;line-height:15px;">437 F1GE</span>
<div class="bt" style="left:1125px;top:222px;width:112px;height:23.5px"></div>
<span style="left:1152.5px;top:223.5px;line-height:21px;font-size:18.5px;letter-spacing:0.24px;">Lance!</span>
<div class="bt" style="left:1117px;top:254px;width:128px;height:23.5px"></div>
<span style="left:1124px;top:255.5px;line-height:21px;font-size:18.5px;letter-spacing:0.33px;">MontreVidéo!</span>
<div class="bt" style="left:1117px;top:285.5px;width:56px;height:24px"></div>
<span style="left:1127.75px;top:290px;line-height:15px;letter-spacing:0.09px;">ReInit</span>
<div class="bt" style="left:1117px;top:317.5px;width:56px;height:24px"></div>
<span style="left:1129.5px;top:322px;line-height:15px;">Reset</span>
<div class="bt" style="left:1181px;top:285.5px;width:64px;height:48.5px"></div>
<span style="left:1196.25px;top:300.5px;line-height:21px;font-size:19px;letter-spacing:-0.34px;">Quit</span>
<div style="left:668px;top:342px;width:345px;height:168px;background:#D4D0C8;border:2px solid #000;border-radius:24px"></div>
<span style="left:796px;top:357.5px;line-height:15px;font-weight:700;letter-spacing:0.75px;">Equaliseur</span>
<div class="grp" style="left:684.5px;top:374px;width:87.5px;height:55px"></div>
<span style="left:692.5px;top:366px;line-height:15px;letter-spacing:0.15px;background:#D4D0C8;padding:0 1px;margin-left:-1px;">Equalisation</span>
<div class="rd" style="left:693.3px;top:386.3px"></div>
<span style="left:710.5px;top:384.5px;line-height:15px;letter-spacing:0.07px;">Off</span>
<div class="rd on" style="left:693.3px;top:408.3px"></div>
<span style="left:710.5px;top:406.5px;line-height:15px;">On</span>
<div style="left:788px;top:381px;width:57px;height:43px;background:repeating-linear-gradient(90deg,transparent 0,transparent 10.4px,#000 10.4px,#000 11.4px),repeating-linear-gradient(#007800 0,#007800 1px,#002800 1px,#002800 2px)"></div>
<div style="left:852px;top:381px;width:57px;height:43px;background:repeating-linear-gradient(90deg,transparent 0,transparent 10.4px,#000 10.4px,#000 11.4px),repeating-linear-gradient(#007800 0,#007800 1px,#002800 1px,#002800 2px)"></div>
<div class="ck" style="left:692.5px;top:435px"><svg width="13" height="13" viewBox="0 0 13 13" style="left:0;top:0"><path d="M3,5 V8 L5,10 L10,5 V2 L5,7 Z" fill="#000"/></svg></div>
<span style="left:710.5px;top:433.5px;line-height:15px;letter-spacing:0.08px;">Reset Equalizer if carrier unlock</span>
<div class="ck" style="left:692.5px;top:459px"></div>
<span style="left:710.5px;top:457.5px;line-height:15px;letter-spacing:0.11px;">Reset Carrier loop as FEC unlock</span>
<div class="ck" style="left:692.5px;top:483px"><svg width="13" height="13" viewBox="0 0 13 13" style="left:0;top:0"><path d="M3,5 V8 L5,10 L10,5 V2 L5,7 Z" fill="#000"/></svg></div>
<span style="left:710.5px;top:481.5px;line-height:15px;letter-spacing:0.05px;">Reset Equalizer if FEC unlock</span>
<div class="grp" style="left:916px;top:358px;width:80px;height:142px"></div>
<span style="left:924.5px;top:350px;line-height:15px;letter-spacing:0.1px;background:#D4D0C8;padding:0 1px;margin-left:-1px;">EQ Coef</span>
<div class="rd" style="left:925.3px;top:369.8px"></div>
<span style="left:942.5px;top:368px;line-height:15px;letter-spacing:-0.08px;">0 Off</span>
<div class="rd" style="left:925.3px;top:385.73px"></div>
<span style="left:942.5px;top:383.93px;line-height:15px;letter-spacing:-0.03px;">1 lent</span>
<div class="rd" style="left:925.3px;top:401.66px"></div>
<span style="left:942.5px;top:399.86px;line-height:15px;">2</span>
<div class="rd" style="left:925.3px;top:417.59px"></div>
<span style="left:942.5px;top:415.79px;line-height:15px;">3</span>
<div class="rd on" style="left:925.3px;top:433.52px"></div>
<span style="left:942.5px;top:431.72px;line-height:15px;">4</span>
<div class="rd" style="left:925.3px;top:449.45px"></div>
<span style="left:942.5px;top:447.65px;line-height:15px;">5</span>
<div class="rd" style="left:925.3px;top:465.38px"></div>
<span style="left:942.5px;top:463.58px;line-height:15px;">6</span>
<div class="rd" style="left:925.3px;top:481.31px"></div>
<span style="left:942.5px;top:479.51px;line-height:15px;letter-spacing:0.03px;">7 rapide</span>
<svg style="left:1043px;top:400px" width="19" height="19" viewBox="0 0 19 19"><circle cx="9.5" cy="9.5" r="8.5" fill="#000"/><circle cx="9.5" cy="9.5" r="6.7" fill="#00f000"/><path d="M4.71,7.76 A5.1,5.1 0 0 1 7.76,4.71" stroke="#c8ffc8" stroke-width="1.2" fill="none"/><path d="M14.29,11.24 A5.1,5.1 0 0 1 11.24,14.29" stroke="#30a030" stroke-width="1.2" fill="none"/></svg>
<div class="grp" style="left:1028px;top:437px;width:56px;height:63.5px"></div>
<span style="left:1036px;top:429px;line-height:15px;letter-spacing:0.18px;background:#ECE9D8;padding:0 1px;margin-left:-1px;">IQswap</span>
<div class="rd" style="left:1037.3px;top:448.8px"></div>
<span style="left:1054.5px;top:447px;line-height:15px;">On</span>
<div class="rd" style="left:1037.3px;top:465.3px"></div>
<span style="left:1054.5px;top:463.5px;line-height:15px;letter-spacing:0.07px;">Off</span>
<div class="rd on" style="left:1037.3px;top:482.3px"></div>
<span style="left:1054.5px;top:480.5px;line-height:15px;letter-spacing:0.17px;">Auto</span>
<div style="left:1100.5px;top:357.5px;width:160.5px;height:152.5px;background:#ECE9D8;border:2px solid #000;border-radius:24px"></div>
<span style="left:1117px;top:366px;line-height:15px;font-weight:700;letter-spacing:0.63px;">Compensation IQ</span>
<div class="grp" style="left:1108px;top:397px;width:64px;height:47.5px"></div>
<span style="left:1116px;top:389px;line-height:15px;letter-spacing:0.14px;background:#ECE9D8;padding:0 1px;margin-left:-1px;">DCOffset</span>
<div class="rd" style="left:1117.3px;top:408.3px"></div>
<span style="left:1134.5px;top:406.5px;line-height:15px;letter-spacing:0.07px;">Off</span>
<div class="rd on" style="left:1117.3px;top:426.3px"></div>
<span style="left:1134.5px;top:424.5px;line-height:15px;">On</span>
<div class="grp" style="left:1108px;top:453px;width:64px;height:47.5px"></div>
<span style="left:1116px;top:445px;line-height:15px;letter-spacing:0.12px;background:#ECE9D8;padding:0 1px;margin-left:-1px;">Equilibre</span>
<div class="rd" style="left:1117.3px;top:464.3px"></div>
<span style="left:1134.5px;top:462.5px;line-height:15px;letter-spacing:0.07px;">Off</span>
<div class="rd on" style="left:1117.3px;top:482.3px"></div>
<span style="left:1134.5px;top:480.5px;line-height:15px;">On</span>
<span style="left:1180.5px;top:386px;line-height:15px;letter-spacing:-0.71px;">I=  1     Q= -3</span>
<div class="tr" style="left:1181px;top:409px;width:41px;height:13px"></div>
<svg style="left:1186.5px;top:408px" width="8" height="18.5" viewBox="0 0 8 18.5"><polygon points="0,0 8,0 8,14.5 4,18.5 0,14.5" fill="#ECE9D8"/><path d="M0.5,14.5 V0.5 H7" stroke="#fff" fill="none"/><path d="M7.5,0 V14.5 L4,18.2" stroke="#6e6c60" fill="none"/><path d="M6.5,1 V14.5 L4,17.1" stroke="#ACA899" fill="none"/></svg>
<svg style="left:1185px;top:428.5px" width="35" height="2" viewBox="0 0 35 2" shape-rendering="crispEdges"><path d="M1,0v2M5,0v2M10,0v2M14,0v2M19,0v2M23,0v2M28,0v2M33,0v2" stroke="#000" stroke-width="1" transform="translate(0.5,0)"/></svg>
<div class="tb" style="left:1230.5px;top:405.5px;width:14px;height:22px"></div>
<span style="left:1233.5px;top:408.2px;line-height:15px;">1</span>
<span style="left:1188px;top:429px;line-height:15px;letter-spacing:0.22px;">vitesse</span>
<span style="left:1180.5px;top:450px;line-height:15px;letter-spacing:-0.41px;">Q / I =  1 04</span>
<div class="tr" style="left:1181px;top:466px;width:41px;height:13px"></div>
<svg style="left:1186.5px;top:465px" width="8" height="18.5" viewBox="0 0 8 18.5"><polygon points="0,0 8,0 8,14.5 4,18.5 0,14.5" fill="#ECE9D8"/><path d="M0.5,14.5 V0.5 H7" stroke="#fff" fill="none"/><path d="M7.5,0 V14.5 L4,18.2" stroke="#6e6c60" fill="none"/><path d="M6.5,1 V14.5 L4,17.1" stroke="#ACA899" fill="none"/></svg>
<svg style="left:1185px;top:485px" width="35" height="2" viewBox="0 0 35 2" shape-rendering="crispEdges"><path d="M1,0v2M5,0v2M10,0v2M14,0v2M19,0v2M23,0v2M28,0v2M33,0v2" stroke="#000" stroke-width="1" transform="translate(0.5,0)"/></svg>
<div class="tb" style="left:1239px;top:470px;width:13px;height:22px"></div>
<span style="left:1242px;top:472.7px;line-height:15px;">1</span>
<span style="left:1188px;top:485.5px;line-height:15px;letter-spacing:0.22px;">vitesse</span>
<div style="left:676px;top:541px;width:121px;height:56.5px;background:#ECE9D8;border:1px solid #000;border-radius:9px"></div>
<span style="left:684.5px;top:546px;line-height:15px;letter-spacing:0.25px;">Demapper Gain</span>
<div class="tb" style="left:694.5px;top:565.5px;width:29.5px;height:22px"></div>
<span style="left:697.5px;top:568.2px;line-height:15px;">60</span>
<div class="tr" style="left:733px;top:569px;width:54.5px;height:12px"></div>
<svg style="left:756px;top:568px" width="8" height="18" viewBox="0 0 8 18"><polygon points="0,0 8,0 8,14 4,18 0,14" fill="#ECE9D8"/><path d="M0.5,14 V0.5 H7" stroke="#fff" fill="none"/><path d="M7.5,0 V14 L4,17.7" stroke="#6e6c60" fill="none"/><path d="M6.5,1 V14 L4,16.6" stroke="#ACA899" fill="none"/></svg>
<svg style="left:737px;top:588.5px" width="49" height="2" viewBox="0 0 49 2" shape-rendering="crispEdges"><path d="M1,0v2M3,0v2M5,0v2M8,0v2M10,0v2M13,0v2M15,0v2M18,0v2M20,0v2M23,0v2M25,0v2M27,0v2M30,0v2M32,0v2M35,0v2M37,0v2M40,0v2M42,0v2M45,0v2M47,0v2" stroke="#000" stroke-width="1" transform="translate(0.5,0)"/></svg>
<div class="grp" style="left:804.5px;top:525px;width:63px;height:39.5px"></div>
<span style="left:812.5px;top:517px;line-height:15px;letter-spacing:0.17px;background:#ECE9D8;padding:0 1px;margin-left:-1px;">Couleurs</span>
<div class="rd" style="left:813.3px;top:534.3px"></div>
<span style="left:830.5px;top:532.5px;line-height:15px;letter-spacing:0.22px;">Mono</span>
<div class="rd on" style="left:813.3px;top:548.3px"></div>
<span style="left:830.5px;top:546.5px;line-height:15px;letter-spacing:0.09px;">Multi</span>
<div class="bt" style="left:804.5px;top:573px;width:64.5px;height:24.5px"></div>
<span style="left:811.25px;top:575px;line-height:22px;font-size:19.5px;letter-spacing:-0.71px;">Efface</span>
<div class="grp" style="left:876px;top:525px;width:136px;height:71px"></div>
<span style="left:884px;top:517px;line-height:15px;letter-spacing:0.11px;background:#ECE9D8;padding:0 1px;margin-left:-1px;">Constellations IQ</span>
<div class="rd on" style="left:884.3px;top:535.3px"></div>
<span style="left:902px;top:533.5px;line-height:15px;letter-spacing:0.13px;">Après Equaliseur</span>
<div class="rd" style="left:884.3px;top:550.3px"></div>
<span style="left:902px;top:548.5px;line-height:15px;letter-spacing:0.12px;">Après Nyquist</span>
<div class="rd" style="left:884.3px;top:565.3px"></div>
<span style="left:902px;top:563.5px;line-height:15px;letter-spacing:0.11px;">Après Dérotator</span>
<div class="rd" style="left:884.3px;top:580.3px"></div>
<span style="left:902px;top:578.5px;line-height:15px;letter-spacing:0.04px;">A la sortie ADC</span>
<div class="grp" style="left:1020.5px;top:517.5px;width:79px;height:79px"></div>
<span style="left:1029px;top:509.5px;line-height:15px;letter-spacing:0.17px;background:#ECE9D8;padding:0 1px;margin-left:-1px;">NoiseTime</span>
<div class="rd" style="left:1028.8px;top:528.3px"></div>
<span style="left:1046px;top:526.5px;line-height:15px;letter-spacing:-0.05px;">4 kS</span>
<div class="rd" style="left:1028.8px;top:545.3px"></div>
<span style="left:1046px;top:543.5px;line-height:15px;letter-spacing:-0.08px;">16 kS</span>
<div class="rd on" style="left:1028.8px;top:562.3px"></div>
<span style="left:1046px;top:560.5px;line-height:15px;letter-spacing:-0.08px;">64 kS</span>
<div class="rd" style="left:1028.8px;top:579.3px"></div>
<span style="left:1046px;top:577.5px;line-height:15px;letter-spacing:-0.11px;">256 kS</span>
<div style="left:1116px;top:517.5px;width:89px;height:80px;border:1px solid #333"></div>
<span style="left:1120.5px;top:526px;line-height:15px;letter-spacing:0.13px;">Maj affichage</span>
<div class="tb" style="left:1126px;top:545.5px;width:39px;height:22px"></div>
<span style="left:1129px;top:548.2px;line-height:15px;letter-spacing:-0.23px;">250</span>
<span style="left:1172.5px;top:549px;line-height:15px;">mS</span>
<div class="tr" style="left:1127.5px;top:572px;width:66px;height:12.5px"></div>
<svg style="left:1186px;top:571px" width="8" height="18.5" viewBox="0 0 8 18.5"><polygon points="0,0 8,0 8,14.5 4,18.5 0,14.5" fill="#ECE9D8"/><path d="M0.5,14.5 V0.5 H7" stroke="#fff" fill="none"/><path d="M7.5,0 V14.5 L4,18.2" stroke="#6e6c60" fill="none"/><path d="M6.5,1 V14.5 L4,17.1" stroke="#ACA899" fill="none"/></svg>
<svg style="left:1131px;top:591.5px" width="61" height="2" viewBox="0 0 61 2" shape-rendering="crispEdges"><path d="M0,0v2M7,0v2M13,0v2M20,0v2M26,0v2M33,0v2M39,0v2M46,0v2M52,0v2M59,0v2" stroke="#000" stroke-width="1" transform="translate(0.5,0)"/></svg>
<div style="left:372px;top:605px;width:849px;height:176px;background:#A6CAF0;border:2px solid #000;border-radius:24px"></div>
<div style="left:380.5px;top:614px;width:136.5px;height:136px;background:#A0A0A0;border:1px solid;border-color:#f0f0f0 #585858 #585858 #f0f0f0"></div>
<div style="left:385px;top:618.5px;width:127.5px;height:127px;background:#fff;border:1px solid;border-color:#505050 #d8d8d8 #d8d8d8 #505050"></div>
<span style="left:390px;top:623px;line-height:17px;font-size:15px;font-weight:700;letter-spacing:0.39px;">dBm</span>
<span style="left:479.5px;top:627.5px;line-height:15px;letter-spacing:-0.76px;">-10</span>
<span style="left:418px;top:652.5px;line-height:15px;letter-spacing:-0.6px;">-55</span>
<span style="left:395px;top:715px;line-height:15px;letter-spacing:-0.9px;">100</span>
<span style="left:412.5px;top:679px;line-height:14px;font-size:12.5px;font-weight:700;letter-spacing:0.07px;">Puissance</span>
<svg style="left:386px;top:619.5px" width="125.5" height="125" viewBox="0 0 125.5 125"><circle cx="125.5" cy="125" r="65.5" fill="#A0A0A4" stroke="#dcdcdc" stroke-width="1.6"/><circle cx="104" cy="103.5" r="6" fill="#000"/><path d="M8,103.5 L2.5,103.5" stroke="#0000ff" stroke-width="1.7"/><path d="M7.21,88.17 L3.75,87.62" stroke="#0000ff" stroke-width="1"/><path d="M10.8,73.22 L7.47,72.13" stroke="#0000ff" stroke-width="1"/><path d="M16.68,59.01 L13.56,57.42" stroke="#0000ff" stroke-width="1"/><path d="M24.72,45.9 L21.88,43.84" stroke="#0000ff" stroke-width="1"/><path d="M36.12,35.62 L32.23,31.73" stroke="#0000ff" stroke-width="1.7"/><path d="M46.4,24.22 L44.34,21.38" stroke="#0000ff" stroke-width="1"/><path d="M59.51,16.18 L57.92,13.06" stroke="#0000ff" stroke-width="1"/><path d="M73.72,10.3 L72.63,6.97" stroke="#0000ff" stroke-width="1"/><path d="M88.67,6.71 L88.12,3.25" stroke="#0000ff" stroke-width="1"/><path d="M104,7.5 L104,2" stroke="#0000ff" stroke-width="1.7"/><path d="M57.75,46.5 L82.75,77.5" stroke="#000" stroke-width="1"/></svg>
<span style="left:380.5px;top:755.5px;line-height:15px;font-weight:700;letter-spacing:0.73px;">Power RF -48 dBm</span>
<div style="left:528px;top:619px;width:129.5px;height:129px;background:#000"></div>
<svg style="left:528px;top:619px" width="129.5" height="129" viewBox="0 0 129.5 129"><path d="M12.5,0 V129 M25.5,0 V129 M38.5,0 V129 M51.5,0 V129 M64.5,0 V129 M77.5,0 V129 M90.5,0 V129 M103.5,0 V129 M116.5,0 V129 M0,13.5 H129.5 M0,26.5 H129.5 M0,39.5 H129.5 M0,52.5 H129.5 M0,65.5 H129.5 M0,78.5 H129.5 M0,90.5 H129.5 M0,103.5 H129.5 M0,116.5 H129.5 " stroke="#00b818" stroke-width="1" fill="none"/><polyline points="0,60.36 3,49.64 6.5,55.38 9,49.11 11.5,59.64 16.5,52.82 20,44.68 22.5,54.24 25,45.15 28.5,52.21 33.5,62.13 37,56.89 39,48.02 43,58.11 48,50.19 51,44.64 54,59.49 56.5,51.16 59,43.97 64,50.79 67,59.65 70.5,48.37 74,59.29 76.5,47.95 78.5,64.2 82.5,31.01 86.5,62.41 90,68.49 93.5,39.9 96,46.92 100,58.85 103,42.61 105,69.5 108,59.95 110,51.11 112.5,62.56 115.5,54.22 120.5,62.13 125.5,43.83 128.5,69.45" stroke="#ff00ff" stroke-width="1.8" fill="none" stroke-linejoin="miter"/><polyline points="0,46.41 5,56.34 8,42.37 10.5,57.63 13,47.35 16.5,54.74 19.5,60.79 23,48.41 26,62.81 29.5,52.02 33.5,58.29 35.5,48.58 39,58.12 43,47.73 46,54.01 49,40.38 51,49.45 55,64.44 58.5,53.43 63.5,63.37 66,55 68.5,47.09 71.5,60.87 73.5,50.23 77.5,56.63 80.5,53.11 83.5,44.25 86,50.19 90,44.06 93,61.47 95.5,73.21 100.5,54.06 104,47.33 106.5,72.84 109,39.15 113,65.63 116.5,77.25 119,71.07 122,53.14 125,70.52 130,52.92" stroke="#ffff00" stroke-width="1.8" fill="none" stroke-linejoin="miter"/></svg>
<span style="left:532.5px;top:755.5px;line-height:15px;font-weight:700;letter-spacing:0.73px;">Niveau IQ</span>
<div class="ck" style="left:612px;top:757.5px"><svg width="13" height="13" viewBox="0 0 13 13" style="left:0;top:0"><path d="M3,5 V8 L5,10 L10,5 V2 L5,7 Z" fill="#000"/></svg></div>
<span style="left:632px;top:755.5px;line-height:15px;font-weight:700;letter-spacing:0.7px;">x2</span>
<div style="left:669px;top:614px;width:136.5px;height:136px;background:#A0A0A0;border:1px solid;border-color:#f0f0f0 #585858 #585858 #f0f0f0"></div>
<div style="left:673.5px;top:618.5px;width:127.5px;height:127px;background:#fff;border:1px solid;border-color:#505050 #d8d8d8 #d8d8d8 #505050"></div>
<span style="left:678px;top:623px;line-height:17px;font-size:15px;font-weight:700;letter-spacing:-0.25px;">dB</span>
<span style="left:770px;top:627.5px;line-height:15px;">36</span>
<span style="left:709px;top:652.5px;line-height:15px;">18</span>
<span style="left:687.5px;top:715px;line-height:15px;">0</span>
<span style="left:719px;top:677.5px;line-height:15px;font-size:13.5px;font-weight:700;letter-spacing:-0.83px;">MER</span>
<svg style="left:674.5px;top:619.5px" width="125.5" height="125" viewBox="0 0 125.5 125"><circle cx="125.5" cy="125" r="65.5" fill="#A0A0A4" stroke="#dcdcdc" stroke-width="1.6"/><circle cx="103" cy="103.5" r="6" fill="#000"/><path d="M7,103.5 L1.5,103.5" stroke="#0000ff" stroke-width="1.7"/><path d="M6.21,88.17 L2.75,87.62" stroke="#0000ff" stroke-width="1"/><path d="M9.8,73.22 L6.47,72.13" stroke="#0000ff" stroke-width="1"/><path d="M15.68,59.01 L12.56,57.42" stroke="#0000ff" stroke-width="1"/><path d="M23.72,45.9 L20.88,43.84" stroke="#0000ff" stroke-width="1"/><path d="M35.12,35.62 L31.23,31.73" stroke="#0000ff" stroke-width="1.7"/><path d="M45.4,24.22 L43.34,21.38" stroke="#0000ff" stroke-width="1"/><path d="M58.51,16.18 L56.92,13.06" stroke="#0000ff" stroke-width="1"/><path d="M72.72,10.3 L71.63,6.97" stroke="#0000ff" stroke-width="1"/><path d="M87.67,6.71 L87.12,3.25" stroke="#0000ff" stroke-width="1"/><path d="M103,7.5 L103,2" stroke="#0000ff" stroke-width="1.7"/><path d="M75,36.5 L89.5,70.5" stroke="#000" stroke-width="1"/></svg>
<span style="left:677px;top:755.5px;line-height:15px;font-weight:700;letter-spacing:0.84px;">S/N MER  27,0 dB</span>
<div style="left:812px;top:613px;width:145.5px;height:145.5px;background:#fff;border:1px solid #000"></div>
<div style="left:884px;top:613px;width:1px;height:145px;background:#000"></div>
<div style="left:812px;top:685px;width:145px;height:1px;background:#000"></div>
<svg style="left:812px;top:613px" width="145" height="145" viewBox="0 0 145 145"><rect x="39" y="37" width="2" height="2" fill="#c0c000"/><rect x="47" y="38" width="2" height="2" fill="#c0c000"/><rect x="46" y="41" width="2" height="2" fill="#309030"/><rect x="39" y="35" width="2" height="2" fill="#0000ff"/><rect x="45" y="42" width="2" height="2" fill="#0000ff"/><rect x="43" y="44" width="2" height="2" fill="#0000ff"/><rect x="42" y="40" width="2" height="2" fill="#0000ff"/><rect x="43" y="42" width="2" height="2" fill="#0000ff"/><rect x="47" y="37" width="2" height="2" fill="#0000ff"/><rect x="45" y="45" width="2" height="2" fill="#0000ff"/><rect x="45" y="43" width="2" height="2" fill="#0000ff"/><rect x="43" y="40" width="2" height="2" fill="#0000ff"/><rect x="44" y="39" width="2" height="2" fill="#0000ff"/><rect x="44" y="48" width="2" height="2" fill="#0000ff"/><rect x="44" y="38" width="2" height="2" fill="#0000ff"/><rect x="46" y="39" width="2" height="2" fill="#0000ff"/><rect x="42" y="38" width="2" height="2" fill="#0000ff"/><rect x="47" y="38" width="2" height="2" fill="#0000ff"/><rect x="49" y="39" width="2" height="2" fill="#0000ff"/><rect x="42" y="43" width="2" height="2" fill="#0000ff"/><rect x="43" y="41" width="2" height="2" fill="#0000ff"/><rect x="45" y="41" width="2" height="2" fill="#0000ff"/><rect x="106" y="40" width="2" height="2" fill="#c0c000"/><rect x="106" y="39" width="2" height="2" fill="#80a0a0"/><rect x="107" y="37" width="2" height="2" fill="#80a0a0"/><rect x="107" y="43" width="2" height="2" fill="#0000ff"/><rect x="107" y="42" width="2" height="2" fill="#0000ff"/><rect x="113" y="37" width="2" height="2" fill="#0000ff"/><rect x="104" y="42" width="2" height="2" fill="#0000ff"/><rect x="103" y="39" width="2" height="2" fill="#0000ff"/><rect x="102" y="44" width="2" height="2" fill="#0000ff"/><rect x="101" y="41" width="2" height="2" fill="#0000ff"/><rect x="101" y="35" width="2" height="2" fill="#0000ff"/><rect x="108" y="42" width="2" height="2" fill="#0000ff"/><rect x="107" y="37" width="2" height="2" fill="#0000ff"/><rect x="100" y="40" width="2" height="2" fill="#0000ff"/><rect x="106" y="43" width="2" height="2" fill="#0000ff"/><rect x="102" y="37" width="2" height="2" fill="#0000ff"/><rect x="104" y="42" width="2" height="2" fill="#0000ff"/><rect x="98" y="43" width="2" height="2" fill="#0000ff"/><rect x="107" y="43" width="2" height="2" fill="#0000ff"/><rect x="105" y="41" width="2" height="2" fill="#0000ff"/><rect x="105" y="45" width="2" height="2" fill="#0000ff"/><rect x="110" y="42" width="2" height="2" fill="#0000ff"/><rect x="40" y="110" width="2" height="2" fill="#c0c000"/><rect x="45" y="108" width="2" height="2" fill="#80a0a0"/><rect x="42" y="105" width="2" height="2" fill="#c0c000"/><rect x="39" y="104" width="2" height="2" fill="#0000ff"/><rect x="42" y="109" width="2" height="2" fill="#0000ff"/><rect x="44" y="102" width="2" height="2" fill="#0000ff"/><rect x="41" y="105" width="2" height="2" fill="#0000ff"/><rect x="43" y="104" width="2" height="2" fill="#0000ff"/><rect x="36" y="105" width="2" height="2" fill="#0000ff"/><rect x="45" y="108" width="2" height="2" fill="#0000ff"/><rect x="46" y="103" width="2" height="2" fill="#0000ff"/><rect x="42" y="103" width="2" height="2" fill="#0000ff"/><rect x="40" y="105" width="2" height="2" fill="#0000ff"/><rect x="43" y="102" width="2" height="2" fill="#0000ff"/><rect x="31" y="108" width="2" height="2" fill="#0000ff"/><rect x="47" y="98" width="2" height="2" fill="#0000ff"/><rect x="39" y="105" width="2" height="2" fill="#0000ff"/><rect x="42" y="101" width="2" height="2" fill="#0000ff"/><rect x="41" y="107" width="2" height="2" fill="#0000ff"/><rect x="44" y="107" width="2" height="2" fill="#0000ff"/><rect x="50" y="104" width="2" height="2" fill="#0000ff"/><rect x="40" y="102" width="2" height="2" fill="#0000ff"/><rect x="105" y="106" width="2" height="2" fill="#80a0a0"/><rect x="102" y="105" width="2" height="2" fill="#c0c000"/><rect x="103" y="109" width="2" height="2" fill="#80a0a0"/><rect x="104" y="101" width="2" height="2" fill="#0000ff"/><rect x="106" y="102" width="2" height="2" fill="#0000ff"/><rect x="105" y="103" width="2" height="2" fill="#0000ff"/><rect x="101" y="105" width="2" height="2" fill="#0000ff"/><rect x="105" y="103" width="2" height="2" fill="#0000ff"/><rect x="110" y="104" width="2" height="2" fill="#0000ff"/><rect x="106" y="105" width="2" height="2" fill="#0000ff"/><rect x="104" y="104" width="2" height="2" fill="#0000ff"/><rect x="104" y="102" width="2" height="2" fill="#0000ff"/><rect x="108" y="101" width="2" height="2" fill="#0000ff"/><rect x="107" y="102" width="2" height="2" fill="#0000ff"/><rect x="103" y="101" width="2" height="2" fill="#0000ff"/><rect x="107" y="103" width="2" height="2" fill="#0000ff"/><rect x="109" y="100" width="2" height="2" fill="#0000ff"/><rect x="103" y="97" width="2" height="2" fill="#0000ff"/><rect x="109" y="104" width="2" height="2" fill="#0000ff"/><rect x="104" y="105" width="2" height="2" fill="#0000ff"/><rect x="110" y="99" width="2" height="2" fill="#0000ff"/><rect x="101" y="106" width="2" height="2" fill="#0000ff"/></svg>
<span style="left:836px;top:759px;line-height:15px;font-weight:700;letter-spacing:0.53px;">Constellations</span>
<div style="left:963px;top:613px;width:161px;height:128.5px;background:#D4D0C8;border:1px solid #000"></div>
<span style="left:972.5px;top:622px;line-height:15px;letter-spacing:0.09px;">Bits corrigés</span>
<div class="tb" style="left:1069px;top:621px;width:47px;height:22.5px"></div>
<span style="left:1072px;top:623.7px;line-height:15px;font-weight:700;letter-spacing:0.7px;font-family:&quot;Liberation Sans&quot;;">0</span>
<span style="left:972.5px;top:645.5px;line-height:15px;letter-spacing:0.11px;">Octets corrigés</span>
<div class="tb" style="left:1069px;top:645.5px;width:47px;height:22px"></div>
<span style="left:1072px;top:648.2px;line-height:15px;font-weight:700;letter-spacing:0.7px;">0</span>
<span style="left:972.5px;top:670px;line-height:15px;letter-spacing:0.29px;">par Reed Solomon</span>
<span style="left:972.5px;top:693.5px;line-height:15px;letter-spacing:0.09px;">Bits corrigés</span>
<span style="left:972.5px;top:709px;line-height:15px;letter-spacing:0.06px;">par Viterbi</span>
<div class="tb" style="left:1060.5px;top:702px;width:55.5px;height:22px"></div>
<span style="left:1063.5px;top:704.7px;line-height:15px;font-weight:700;letter-spacing:0.7px;">0</span>
<span style="left:972px;top:752.5px;line-height:17px;font-size:15px;font-weight:700;letter-spacing:-0.09px;">Vber</span>
<div style="left:1012px;top:749px;width:105.5px;height:25.5px;background:#00FF00;border:1px solid #000"></div>
<span style="left:1054.5px;top:754px;line-height:16px;font-size:14px;font-weight:700;letter-spacing:-0.37px;color:#e020e0;-webkit-text-stroke:0;">0%</span>
<span style="left:1130.5px;top:619px;line-height:15px;letter-spacing:0.06px;">Porteuse</span>
<div style="left:1188px;top:613px;width:25px;height:25px;background:repeating-conic-gradient(#f0f0f0 0 25%,#b4cce8 0 50%) 0 0/2px 2px"></div>
<svg style="left:1187.5px;top:612.5px" width="26" height="26" viewBox="0 0 26 26"><circle cx="13" cy="13" r="12" fill="#000"/><circle cx="13" cy="13" r="10.4" fill="none" stroke="#90c890" stroke-width="1"/><circle cx="13" cy="13" r="9.2" fill="#00f000"/><path d="M5.86,10.4 A7.6,7.6 0 0 1 10.4,5.86" stroke="#c8ffc8" stroke-width="1.2" fill="none"/><path d="M20.14,15.6 A7.6,7.6 0 0 1 15.6,20.14" stroke="#30a030" stroke-width="1.2" fill="none"/></svg>
<span style="left:1132.5px;top:647.5px;line-height:15px;letter-spacing:0.19px;">Synchro</span>
<div style="left:1188px;top:645px;width:25px;height:25px;background:repeating-conic-gradient(#f0f0f0 0 25%,#b4cce8 0 50%) 0 0/2px 2px"></div>
<svg style="left:1187.5px;top:644.5px" width="26" height="26" viewBox="0 0 26 26"><circle cx="13" cy="13" r="12" fill="#000"/><circle cx="13" cy="13" r="10.4" fill="none" stroke="#90c890" stroke-width="1"/><circle cx="13" cy="13" r="9.2" fill="#00f000"/><path d="M5.86,10.4 A7.6,7.6 0 0 1 10.4,5.86" stroke="#c8ffc8" stroke-width="1.2" fill="none"/><path d="M20.14,15.6 A7.6,7.6 0 0 1 15.6,20.14" stroke="#30a030" stroke-width="1.2" fill="none"/></svg>
<span style="left:1132px;top:677.5px;line-height:15px;letter-spacing:0.09px;">Viterbi</span>
<span style="left:1132px;top:693.5px;line-height:15px;letter-spacing:-0.12px;">Fec  3/4</span>
<div style="left:1188px;top:677px;width:25px;height:25px;background:repeating-conic-gradient(#f0f0f0 0 25%,#b4cce8 0 50%) 0 0/2px 2px"></div>
<svg style="left:1187.5px;top:676.5px" width="26" height="26" viewBox="0 0 26 26"><circle cx="13" cy="13" r="12" fill="#000"/><circle cx="13" cy="13" r="10.4" fill="none" stroke="#90c890" stroke-width="1"/><circle cx="13" cy="13" r="9.2" fill="#00f000"/><path d="M5.86,10.4 A7.6,7.6 0 0 1 10.4,5.86" stroke="#c8ffc8" stroke-width="1.2" fill="none"/><path d="M20.14,15.6 A7.6,7.6 0 0 1 15.6,20.14" stroke="#30a030" stroke-width="1.2" fill="none"/></svg>
<span style="left:1140.5px;top:726px;line-height:15px;font-weight:700;letter-spacing:0.62px;">TS Status</span>
<div style="left:1156px;top:741px;width:33px;height:33px;background:repeating-conic-gradient(#f0f0f0 0 25%,#b4cce8 0 50%) 0 0/2px 2px"></div>
<svg style="left:1155.5px;top:740.5px" width="34" height="34" viewBox="0 0 34 34"><circle cx="17" cy="17" r="16" fill="#000"/><circle cx="17" cy="17" r="14.4" fill="none" stroke="#90c890" stroke-width="1"/><circle cx="17" cy="17" r="13.2" fill="#00f000"/><path d="M6.1,13.03 A11.6,11.6 0 0 1 13.03,6.1" stroke="#c8ffc8" stroke-width="1.2" fill="none"/><path d="M27.9,20.97 A11.6,11.6 0 0 1 20.97,27.9" stroke="#30a030" stroke-width="1.2" fill="none"/></svg>
</div></body></html>
